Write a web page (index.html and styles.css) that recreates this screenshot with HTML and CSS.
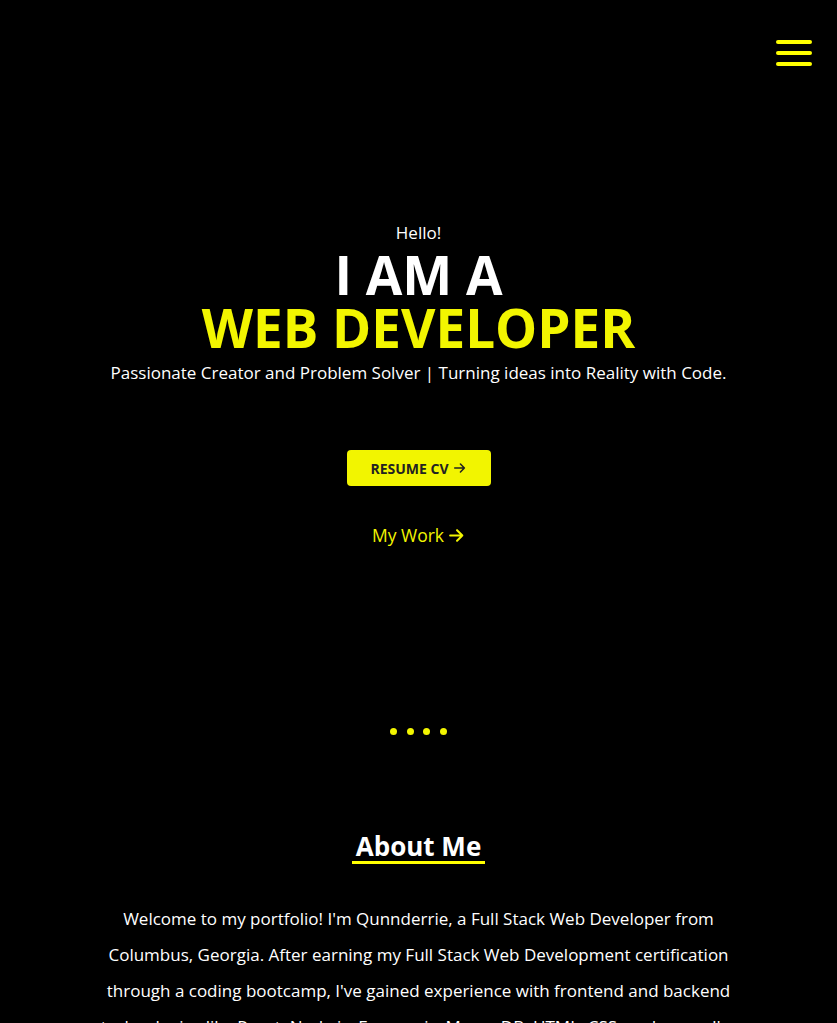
FILE: index.html
```html
<!DOCTYPE html>
<html lang="en">
<head>
<meta charset="utf-8">
<title>Portfolio</title>
<link rel="stylesheet" href="styles.css">
</head>
<body>
<header class="topbar">
  <button class="menu" aria-label="Menu">
    <span class="bar"></span><span class="bar"></span><span class="bar"></span>
  </button>
</header>
<section class="hero">
  <p class="hello">Hello!</p>
  <h1 class="title"><span class="line white">I AM A</span><span class="line yellow">WEB DEVELOPER</span></h1>
  <p class="tagline">Passionate Creator and Problem Solver | Turning ideas into Reality with Code.</p>
  <a class="btn" href="#">RESUME CV <svg class="arrow" viewBox="0 0 16 16" width="14" height="14"><path d="M2 8h11M8.5 3.5 13 8l-4.5 4.5" fill="none" stroke="currentColor" stroke-width="1.8" stroke-linecap="round" stroke-linejoin="round"/></svg></a>
  <a class="work" href="#">My Work <svg class="arrow" viewBox="0 0 16 16" width="17" height="17"><path d="M2 8h11.5M8.5 3 13.5 8l-5 5" fill="none" stroke="currentColor" stroke-width="1.9" stroke-linecap="round" stroke-linejoin="round"/></svg></a>
  <div class="dots"><span></span><span></span><span></span><span></span></div>
</section>
<section class="about">
  <h2 class="about-title">About Me</h2>
  <p class="about-text">Welcome to my portfolio! I'm Qunnderrie, a Full Stack Web Developer from Columbus, Georgia. After earning my Full Stack Web Development certification through a coding bootcamp, I've gained experience with frontend and backend technologies like React, Node.js, Express.js, MongoDB, HTML, CSS, and more. I'm passionate about building clean, responsive, and user-friendly applications.</p>
</section>
</body>
</html>
```
FILE: styles.css
```css
* { box-sizing: border-box; }
html, body { margin: 0; padding: 0; background: #000; }
body {
  font-family: "Open Sans", "Noto Sans", sans-serif;
  color: #fff;
  overflow: hidden;
  height: 1023px;
}
.topbar {
  display: flex;
  justify-content: flex-end;
  padding: 40px 25px 0 0;
}
.menu {
  background: none;
  border: 0;
  padding: 0;
  display: flex;
  flex-direction: column;
  gap: 7px;
  cursor: pointer;
}
.menu .bar {
  display: block;
  width: 36px;
  height: 4px;
  border-radius: 2px;
  background: #ffff00;
}
.hero {
  display: flex;
  flex-direction: column;
  align-items: center;
  text-align: center;
  padding-top: 155px;
}
.hello {
  margin: 0;
  font-size: 17px;
  line-height: 24px;
}
.title {
  margin: 3px 0 0;
  display: flex;
  flex-direction: column;
  font-weight: 700;
  font-size: 53px;
  line-height: 53px;
}
.white { color: #fff; }
.yellow { color: #f2f500; }
.tagline {
  margin: 7px 0 0;
  font-size: 17px;
  line-height: 24px;
}
.btn {
  margin-top: 65px;
  display: inline-flex;
  align-items: center;
  gap: 4px;
  width: 144px;
  height: 36px;
  justify-content: center;
  background: #f2f500;
  color: #222;
  border-radius: 4px;
  font-weight: 700;
  font-size: 14px;
  text-decoration: none;
}
.work {
  margin-top: 37px;
  display: inline-flex;
  align-items: center;
  gap: 4px;
  color: #f2f500;
  font-size: 17.5px;
  text-decoration: none;
}
.dots {
  margin-top: 181px;
  display: flex;
  gap: 9.5px;
}
.dots span {
  width: 7px;
  height: 7px;
  border-radius: 50%;
  background: #f2f500;
}
.about {
  display: flex;
  flex-direction: column;
  align-items: center;
  text-align: center;
  padding-top: 97px;
}
.about-title {
  margin: 0;
  font-size: 26px;
  font-weight: 700;
  line-height: 29px;
  padding: 0 4px 0;
  border-bottom: 3px solid #ffff00;
}
.about-text {
  margin: 37px 0 0;
  max-width: 640px;
  font-size: 17px;
  line-height: 36px;
}
```
